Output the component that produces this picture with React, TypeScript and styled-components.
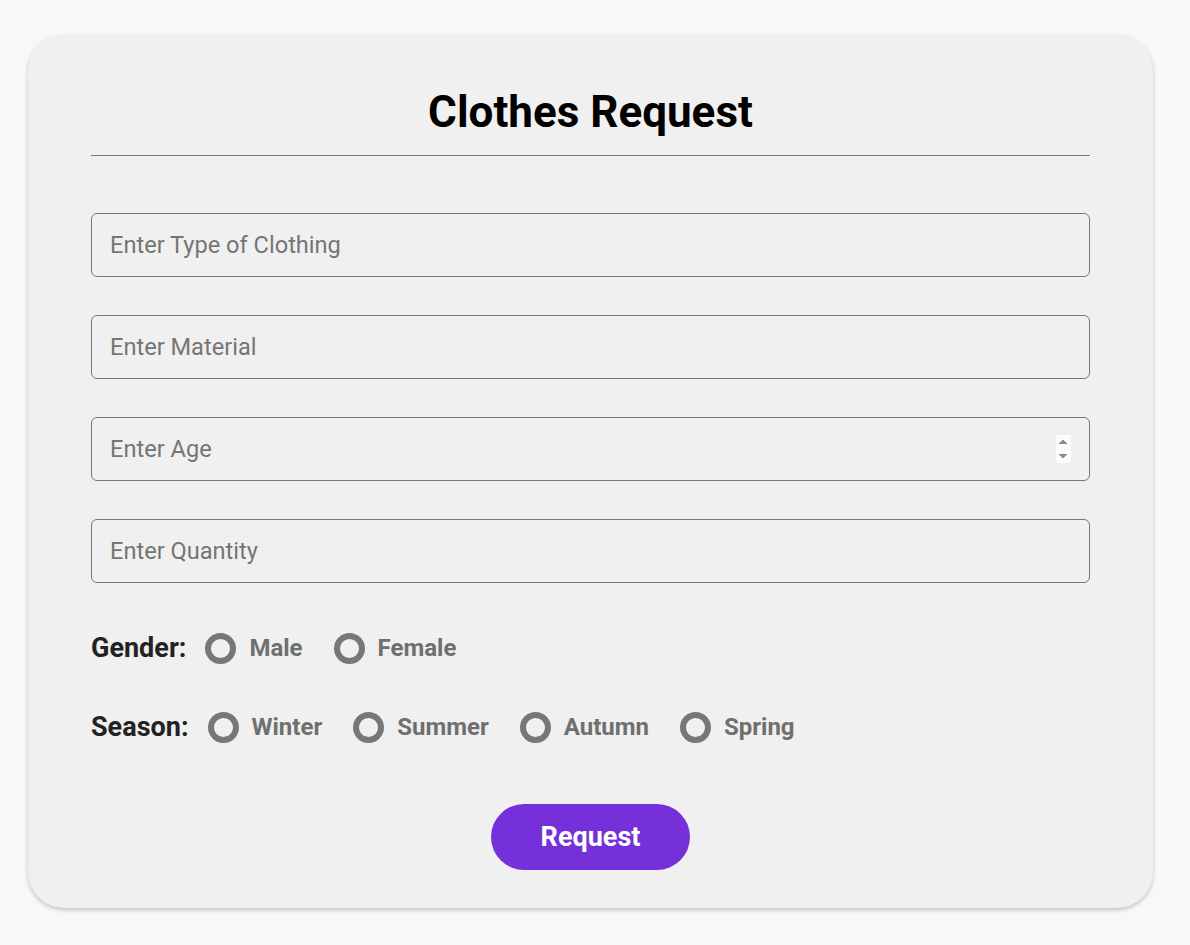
import styled, { createGlobalStyle } from "styled-components";

const GlobalStyle = createGlobalStyle`
  body {
    margin: 0;
    background: #f8f8f8;
    font-family: Roboto, "Liberation Sans", sans-serif;
  }
`;

const Page = styled.div`
  padding: 35px 37px 37px 28px;
`;

const Card = styled.form`
  width: 1125px;
  box-sizing: border-box;
  background: #f0f0f0;
  border-radius: 36px;
  box-shadow: 0 2px 4px rgba(0, 0, 0, 0.22);
  padding: 51px 63px 38px;
  display: flex;
  flex-direction: column;
`;

const Title = styled.h1`
  margin: 0;
  font-size: 44px;
  line-height: 52px;
  font-weight: 700;
  color: #000;
  text-align: center;
`;

const Divider = styled.hr`
  margin: 17px 0 57px;
  border: none;
  border-top: 1px solid #777;
`;

const Fields = styled.div`
  display: flex;
  flex-direction: column;
  gap: 38px;
`;

const Input = styled.input`
  box-sizing: border-box;
  width: 100%;
  height: 64px;
  padding: 0 18px;
  border: 1px solid #777;
  border-radius: 6px;
  background: transparent;
  font-family: Roboto, "Liberation Sans", sans-serif;
  font-size: 23.6px;
  color: #222;
  outline: none;

  &::placeholder {
    color: #757575;
  }

  &::-webkit-inner-spin-button {
    opacity: 1;
  }
`;

const Group = styled.div<{ $top: number }>`
  display: flex;
  align-items: center;
  margin-top: ${(p) => p.$top}px;
  height: 32px;
`;

const GroupLabel = styled.span`
  font-size: 27px;
  font-weight: 700;
  color: #222;
  margin-right: 19px;
`;

const Option = styled.label`
  display: flex;
  align-items: center;
  gap: 13px;
  margin-right: 31px;
  font-size: 24px;
  font-weight: 700;
  color: #6f6f6f;
  cursor: pointer;
`;

const Radio = styled.input`
  appearance: none;
  margin: 0;
  width: 31px;
  height: 31px;
  box-sizing: border-box;
  border: 6px solid #777;
  border-radius: 50%;
  background: transparent;

  &:checked {
    background: radial-gradient(#7630d9 45%, transparent 50%);
  }
`;

const Submit = styled.button`
  align-self: center;
  margin-top: 61px;
  width: 199px;
  height: 66px;
  border: none;
  border-radius: 33px;
  background: #7630d9;
  color: #fff;
  font-family: Roboto, "Liberation Sans", sans-serif;
  font-size: 27px;
  font-weight: 700;
  cursor: pointer;
`;

const genders = ["Male", "Female"];
const seasons = ["Winter", "Summer", "Autumn", "Spring"];

const App = () => {
  return (
    <Page>
      <GlobalStyle />
      <Card onSubmit={(e) => e.preventDefault()}>
        <Title>Clothes Request</Title>
        <Divider />
        <Fields>
          <Input type="text" placeholder="Enter Type of Clothing" />
          <Input type="text" placeholder="Enter Material" />
          <Input type="number" placeholder="Enter Age" />
          <Input type="text" placeholder="Enter Quantity" />
        </Fields>
        <Group $top={49}>
          <GroupLabel>Gender:</GroupLabel>
          {genders.map((g) => (
            <Option key={g}>
              <Radio type="radio" name="gender" value={g} />
              {g}
            </Option>
          ))}
        </Group>
        <Group $top={47}>
          <GroupLabel>Season:</GroupLabel>
          {seasons.map((s) => (
            <Option key={s}>
              <Radio type="radio" name="season" value={s} />
              {s}
            </Option>
          ))}
        </Group>
        <Submit type="submit">Request</Submit>
      </Card>
    </Page>
  );
};

export default App;
